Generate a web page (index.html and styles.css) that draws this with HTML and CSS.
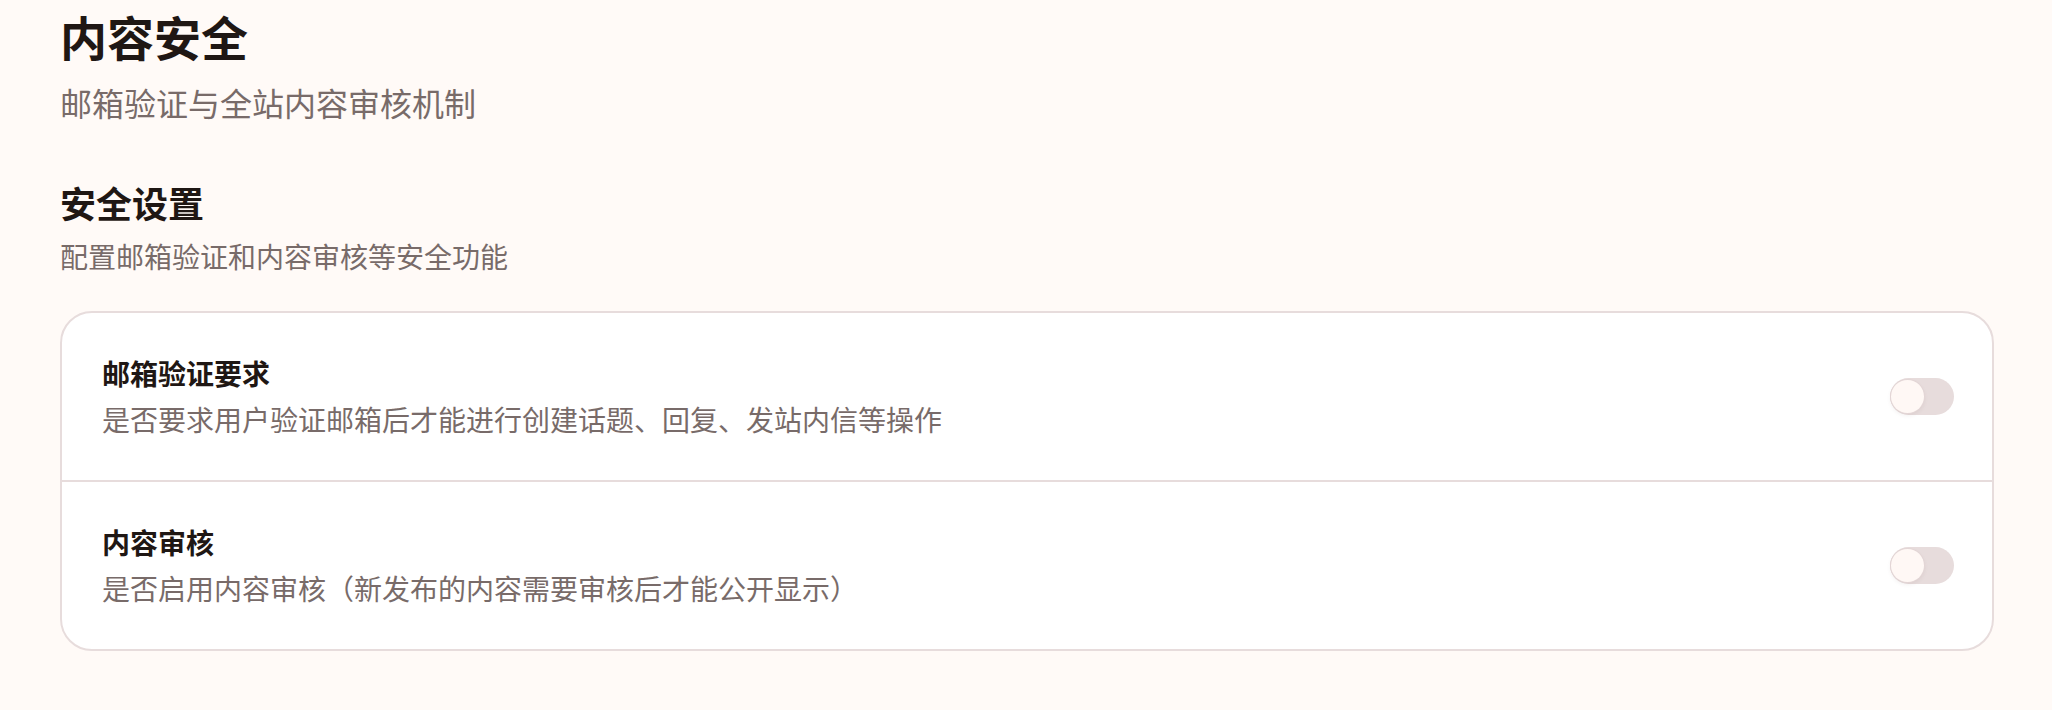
FILE: index.html
```html
<!DOCTYPE html>
<html lang="zh-CN">
<head>
<meta charset="utf-8">
<title>内容安全</title>
<link rel="stylesheet" href="styles.css">
</head>
<body>
<main class="page">
  <header class="page-head">
    <h1 class="page-title">内容安全</h1>
    <p class="page-sub">邮箱验证与全站内容审核机制</p>
  </header>
  <section class="section">
    <h2 class="section-title">安全设置</h2>
    <p class="section-desc">配置邮箱验证和内容审核等安全功能</p>
    <div class="card">
      <div class="row">
        <div class="row-text">
          <div class="row-title">邮箱验证要求</div>
          <div class="row-desc">是否要求用户验证邮箱后才能进行创建话题、回复、发站内信等操作</div>
        </div>
        <button class="switch" type="button" aria-pressed="false"><span class="thumb"></span></button>
      </div>
      <div class="row">
        <div class="row-text">
          <div class="row-title">内容审核</div>
          <div class="row-desc">是否启用内容审核（新发布的内容需要审核后才能公开显示）</div>
        </div>
        <button class="switch" type="button" aria-pressed="false"><span class="thumb"></span></button>
      </div>
    </div>
  </section>
</main>
</body>
</html>
```
FILE: styles.css
```css
* { box-sizing: border-box; }
html, body { margin: 0; padding: 0; }
body {
  background: #fffaf7;
  font-family: "Noto Sans CJK SC", "Noto Sans", sans-serif;
  color: #1f1714;
}
.page {
  padding: 7px 58px 40px 60px;
}
.page-title {
  margin: 0;
  font-size: 47px;
  line-height: 58px;
  font-weight: 700;
  color: #1f1714;
}
.page-sub {
  margin: 15px 0 0 0;
  font-size: 32px;
  line-height: 44px;
  color: #786b69;
}
.section {
  margin-top: 54px;
}
.section-title {
  margin: 0;
  font-size: 36px;
  line-height: 48px;
  font-weight: 700;
  color: #1f1714;
}
.section-desc {
  margin: 10px 0 0 0;
  font-size: 28px;
  line-height: 40px;
  color: #786b69;
}
.card {
  margin-top: 35px;
  background: #ffffff;
  border: 2px solid #e7dcdc;
  border-radius: 32px;
  overflow: hidden;
}
.row {
  display: flex;
  align-items: center;
  justify-content: space-between;
  padding: 41px 38px 42px 40px;
}
.row + .row {
  border-top: 2px solid #e7dcdc;
}
.row-text {
  display: flex;
  flex-direction: column;
  gap: 8px;
}
.row-title {
  font-size: 28px;
  line-height: 38px;
  font-weight: 700;
  color: #1f1714;
}
.row-desc {
  font-size: 28px;
  line-height: 38px;
  color: #786b69;
}
.switch {
  position: relative;
  width: 64px;
  height: 37px;
  padding: 0;
  border: none;
  border-radius: 999px;
  background: #e7dcdc;
  cursor: pointer;
}
.thumb {
  position: absolute;
  left: 1px;
  top: 2px;
  width: 33px;
  height: 33px;
  border-radius: 50%;
  background: #fff8f5;
  box-shadow: 0 0 0 1px #e3d6d6, 0 2px 4px rgba(120, 90, 90, 0.12);
}
```
